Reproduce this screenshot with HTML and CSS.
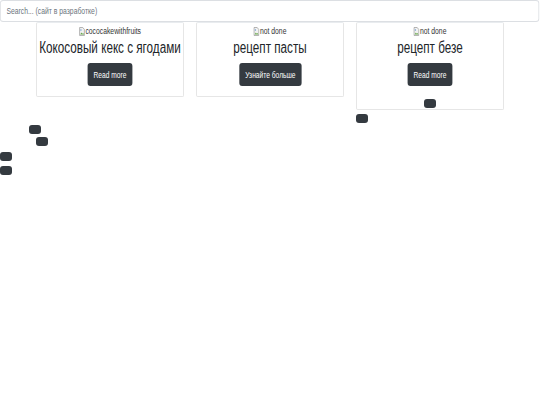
FILE: index.html
```html
<!DOCTYPE html>
<html lang="ru">
<head>
<meta charset="utf-8">
<title>Рецепты</title>
<link rel="stylesheet" href="styles.css">
</head>
<body>
<div class="search-wrap">
  <input class="search" type="text" placeholder="Search... (сайт в разработке)">
</div>
<div class="cards">
  <div class="card">
    <div class="card-body">
      <div class="alt"><svg class="broken" viewBox="0 0 7 9" width="7" height="9"><path d="M0.5 0.5h4l2 2v6h-6z" fill="#f2f2f2" stroke="#9a9a9a" stroke-width="0.8"/><path d="M1.2 7.5l1.6-2 1.2 1.3 0.9-0.9 1.3 1.6z" fill="#6aa84f"/><circle cx="2.2" cy="3" r="0.7" fill="#4a86c8"/></svg><span>cococakewithfruits</span></div>
      <h3 class="title">Кокосовый кекс с ягодами</h3>
      <a class="btn">Read more</a>
    </div>
  </div>
  <div class="card">
    <div class="card-body">
      <div class="alt"><svg class="broken" viewBox="0 0 7 9" width="7" height="9"><path d="M0.5 0.5h4l2 2v6h-6z" fill="#f2f2f2" stroke="#9a9a9a" stroke-width="0.8"/><path d="M1.2 7.5l1.6-2 1.2 1.3 0.9-0.9 1.3 1.6z" fill="#6aa84f"/><circle cx="2.2" cy="3" r="0.7" fill="#4a86c8"/></svg><span>not done</span></div>
      <h3 class="title">рецепт пасты</h3>
      <a class="btn">Узнайте больше</a>
    </div>
  </div>
  <div class="card">
    <div class="card-body">
      <div class="alt"><svg class="broken" viewBox="0 0 7 9" width="7" height="9"><path d="M0.5 0.5h4l2 2v6h-6z" fill="#f2f2f2" stroke="#9a9a9a" stroke-width="0.8"/><path d="M1.2 7.5l1.6-2 1.2 1.3 0.9-0.9 1.3 1.6z" fill="#6aa84f"/><circle cx="2.2" cy="3" r="0.7" fill="#4a86c8"/></svg><span>not done</span></div>
      <h3 class="title">рецепт безе</h3>
      <a class="btn">Read more</a>
    </div>
    <div class="card-foot"><button class="btn-empty"></button></div>
  </div>
</div>
<div class="row row-a"><button class="btn-empty"></button></div>
<div class="row row-b"><button class="btn-empty"></button></div>
<div class="row row-c"><button class="btn-empty"></button></div>
<div class="row row-d"><button class="btn-empty"></button></div>
<div class="row row-e"><button class="btn-empty"></button></div>
</body>
</html>
```
FILE: styles.css
```css
html, body {
  margin: 0;
  background: #ffffff;
  overflow: hidden;
}
body {
  font-family: "Liberation Sans", Arial, sans-serif;
  color: #212529;
}
.search-wrap {
  width: 539px;
  height: 22px;
  overflow: visible;
}
.search {
  display: block;
  box-sizing: border-box;
  width: 674px;
  height: 22px;
  margin: 0;
  padding: 0 7px;
  border: 1px solid #dcdfe3;
  border-radius: 4px / 3px;
  font-family: inherit;
  font-size: 8.5px;
  color: #495057;
  background: #fff;
  outline: none;
  transform: scaleX(0.8);
  transform-origin: 0 0;
}
.search::placeholder {
  color: #6c757d;
}
.cards {
  display: flex;
  align-items: flex-start;
  gap: 12px;
  padding-left: 36px;
}
.card {
  box-sizing: border-box;
  width: 148px;
  border: 1px solid #e6e6e6;
  border-top-color: #e9ecef;
  border-radius: 2px;
  text-align: center;
}
.card-body {
  padding: 3px 0 10px;
}
.alt {
  display: flex;
  justify-content: center;
  align-items: center;
  height: 10px;
  font-size: 8.5px;
  line-height: 10px;
  color: #333;
  white-space: nowrap;
  transform: scaleX(0.8);
}
.broken {
  display: block;
  width: 8px;
}
.title {
  display: flex;
  justify-content: center;
  margin: 3px 0 6px;
  font-size: 16px;
  font-weight: 400;
  line-height: 18px;
  color: #212529;
  white-space: nowrap;
  transform: scaleX(0.73);
}
.btn {
  display: inline-block;
  height: 23px;
  padding: 0 8.5px;
  line-height: 23px;
  font-size: 9.5px;
  color: #fff;
  background: #343a40;
  border-radius: 4px / 3px;
  white-space: nowrap;
  transform: scaleX(0.7);
}
.card-foot {
  padding: 3px 0 1px;
}
.btn-empty {
  display: block;
  width: 12px;
  height: 9px;
  padding: 0;
  border: 0;
  border-radius: 3px;
  background: #343a40;
}
.card-foot .btn-empty {
  margin: 0 auto;
}
.row-a { padding: 4px 0 0 356px; }
.row-b { padding: 2px 0 0 29px; }
.row-c { padding: 3px 0 0 36px; }
.row-d { padding: 6px 0 0 0; }
.row-e { padding: 5px 0 0 0; }
```
